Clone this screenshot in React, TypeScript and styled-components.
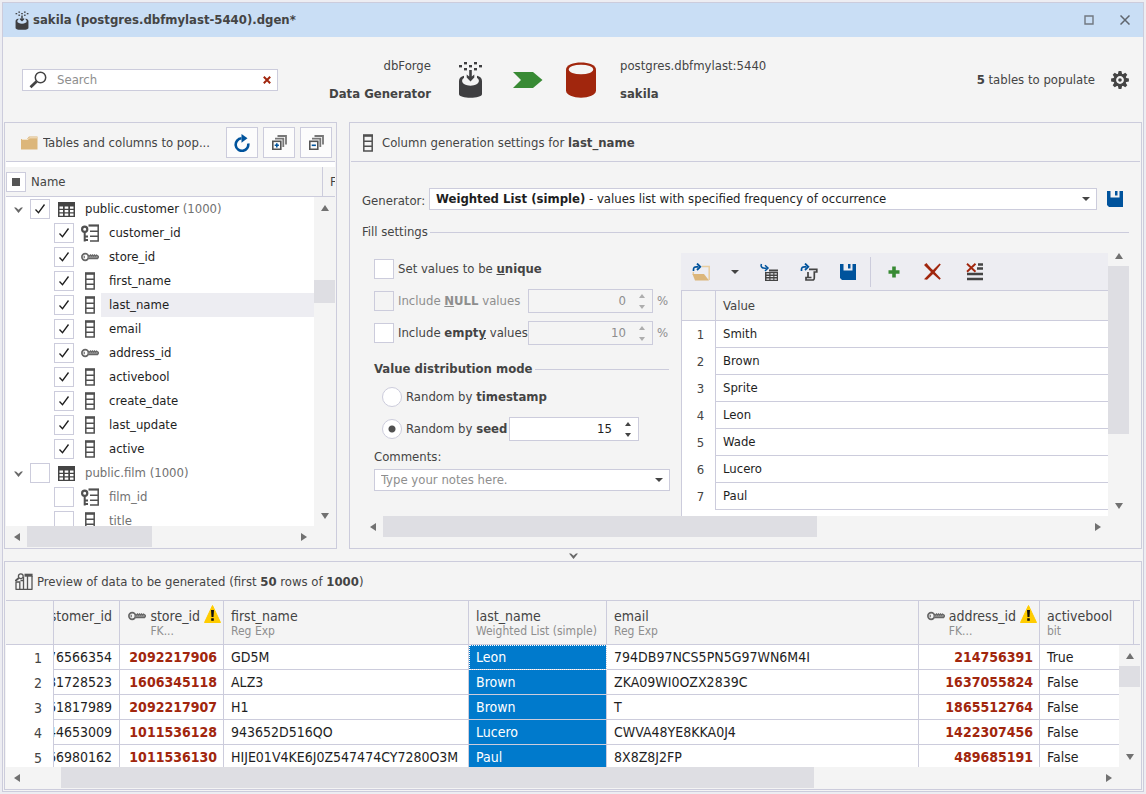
import React from "react";
import styled, { createGlobalStyle } from "styled-components";

const LINE = "#ccccdc";
const BG = "#f4f4f4";
const TEXT = "#444444";
const INK = "#1e1e1e";
const MUTED = "#8e8e8e";
const THUMB = "#dedee3";
const BLUE = "#00539c";
const RED = "#a1260d";
const GREEN = "#388a34";

const GlobalStyle = createGlobalStyle`
  * { box-sizing: border-box; }
  body {
    margin: 0;
    background: #ededf2;
    color: ${TEXT};
    font-family: "DejaVu Sans Condensed", "Noto Sans", Tahoma, sans-serif;
    font-size: 13px;
    line-height: 16px;
  }
  button, input, select { font: inherit; color: inherit; margin: 0; padding: 0; }
  button { border: 0; background: none; cursor: pointer; }
  svg { display: block; flex: none; }
`;

/* ---------- icons ---------- */

const GeneratorIcon = ({ small }: { small?: boolean }) => (
  <svg width={small ? 14 : 25} height={small ? 19 : 37} viewBox="0 0 25 37" preserveAspectRatio="none">
    {[[6, 1], [16, 1], [1, 4], [11, 4], [21, 4], [6, 7], [16, 7]].map(([x, y]) => (
      <rect key={`${x}-${y}`} x={x} y={y} width="3" height="2.4" fill="#3f3f41" />
    ))}
    <path d="M1 20C1 17 3 15.500 6 14.700V17C3.500 18 3.500 21.500 6 23C10 25.200 15 25.200 19 23C21.500 21.500 21.500 18 19 17V14.700C22 15.500 24 17 24 20V33C24 38 1 38 1 33Z" fill="#3f3f41" />
    <path d="M11.200 9H13.800V15.500L16.300 13.500V16.500L12.500 20.500L8.700 16.500V13.500L11.200 15.500Z" fill="#3f3f41" />
  </svg>
);

const SearchIcon = () => (
  <svg width="18" height="18" viewBox="0 0 18 18" fill="none" stroke={TEXT}>
    <circle cx="11.500" cy="6.500" r="5.200" strokeWidth="1.500" />
    <path d="M7.500 10.500L1.500 16.200" strokeWidth="2.800" />
  </svg>
);

const CrossIcon = () => (
  <svg width="8" height="8" viewBox="0 0 8 8" stroke={RED} strokeWidth="2">
    <path d="M0.800 0.800L7.200 7.200M7.200 0.800L0.800 7.200" />
  </svg>
);

const ArrowIcon = () => (
  <svg width="37" height="16" viewBox="-7 0 37 16">
    <path d="M0 0H20L29.500 8L20 16H0L8 8Z" fill={GREEN} />
  </svg>
);

const DatabaseIcon = () => (
  <svg width="30" height="36" viewBox="0 0 30 36">
    <path d="M0 7.500C0 -2 30 -2 30 7.500V28.500C30 38 0 38 0 28.500Z" fill={RED} />
    <ellipse cx="15" cy="7.500" rx="12.200" ry="4.800" fill={BG} />
  </svg>
);

const GearIcon = () => (
  <svg width="18" height="18" viewBox="-9 -9 18 18">
    {[0, 45, 90, 135, 180, 225, 270, 315].map((a) => (
      <path key={a} d="M-2.300 -5L-1.400 -8.900H1.400L2.300 -5Z" fill={TEXT} transform={`rotate(${a})`} />
    ))}
    <circle r="5.200" fill="none" stroke={TEXT} strokeWidth="2.600" />
    <circle r="1.800" fill={TEXT} />
  </svg>
);

const FolderIcon = () => (
  <svg width="17" height="14" viewBox="0 0 17 14">
    <path d="M0 3H6L8 0.500H16.500V13.500H0Z" fill="#dcb67a" />
    <path d="M1 3.500H7L8.500 1.800H16" stroke="#f3e3c8" fill="none" />
  </svg>
);

const RefreshIcon = () => (
  <svg width="18" height="18" viewBox="0 0 18 18">
    <path d="M15.200 9.500A6.300 6.300 0 1 1 8.500 4.300" fill="none" stroke={BLUE} strokeWidth="2.600" />
    <path d="M8.500 0L14.500 4.300L8.500 8.700Z" fill={BLUE} />
  </svg>
);

const StackIcon = ({ plus }: { plus?: boolean }) => (
  <svg width="15" height="15" viewBox="0 0 15 15" fill="none">
    <path d="M5.500 1H14V9.500" stroke="#777" strokeWidth="1.800" />
    <path d="M3 3.700H11.300V12" stroke="#777" strokeWidth="1.800" />
    <rect x="0.800" y="6.300" width="8" height="8" stroke="#555" strokeWidth="1.600" />
    <path d={plus ? "M2.700 10.300H6.900M4.800 8.200V12.400" : "M2.700 10.300H6.900"} stroke={BLUE} strokeWidth="1.600" />
  </svg>
);

const TableIcon = () => (
  <svg width="17" height="15" viewBox="0 0 17 15">
    <path d="M0 0H17V15H0Z" fill={TEXT} />
    <path d="M1.500 4.500h3.500v2.200h-3.500zM6.700 4.500h3.600v2.200h-3.600zM12 4.500h3.500v2.200H12zM1.500 8.100h3.500v2.200h-3.500zM6.700 8.100h3.600v2.200h-3.600zM12 8.100h3.500v2.200H12zM1.500 11.500h3.500v2.200h-3.500zM6.700 11.500h3.600v2.200h-3.600zM12 11.500h3.500v2.200H12z" fill="#fff" />
  </svg>
);

const ColumnIcon = () => (
  <svg width="10" height="18" viewBox="0 0 10 18" fill="none" stroke="#505050">
    <path d="M0.800 1V17H9.200V1" strokeWidth="1.500" />
    <path d="M0 1.500H10" strokeWidth="2.600" />
    <path d="M1 7.300H9M1 12.200H9" strokeWidth="1.400" />
  </svg>
);

const KeyIcon = () => (
  <svg width="18" height="10" viewBox="0 0 18 10" fill="none" stroke="#666">
    <circle cx="4.200" cy="5" r="3.300" strokeWidth="1.700" />
    <path d="M3.200 3.800V6.200" strokeWidth="1.200" />
    <path d="M7.500 4H8.500L9.500 3L10.500 4L11.500 3L12.500 4L13.500 3L14.500 4L15.500 3L17.300 4.300V5.500L16.500 6.500H7.500" strokeWidth="1.300" fill="#999" />
  </svg>
);

const PrimaryKeyIcon = () => (
  <svg width="18" height="18" viewBox="0 0 18 18" fill="none" stroke="#505050">
    <path d="M9 17H17.200V1" strokeWidth="1.500" />
    <path d="M7.500 1.500H18" strokeWidth="2.200" />
    <path d="M9 7.300H17M9 12.200H17" strokeWidth="1.400" />
    <circle cx="3.700" cy="5.200" r="2.600" strokeWidth="2.200" />
    <path d="M3.700 8V17.500M4 12.500H7M4 16H7" strokeWidth="2" />
  </svg>
);

const PreviewIcon = () => (
  <svg width="18" height="17" viewBox="0 0 18 17" fill="none" stroke="#555" strokeWidth="1.300">
    <path d="M1 16.300V9H4.800V16.300M8.500 16.300V7.500H5.500M8.500 7.500V4M12.500 3V16.300M17 3V16.300M0.500 16.300H17.500" />
    <path d="M9.500 2.200H17.600" strokeWidth="3" />
    <circle cx="5.800" cy="3.200" r="2.400" />
    <path d="M3.800 5L0.500 7.800" strokeWidth="2" />
  </svg>
);

const SaveIcon = () => (
  <svg width="16" height="16" viewBox="0 0 16 16">
    <path d="M0 0H3.500V6.500H12.500V0H16V16H2L0 14Z" fill={BLUE} />
    <path d="M8 0H10.500V4.500H8Z" fill={BLUE} />
  </svg>
);

const WarningIcon = () => (
  <svg width="17" height="18" viewBox="0 0 17 18">
    <path d="M8.500 0.500L16.500 17.500H0.500Z" fill="#fc0" stroke="#fc0" strokeLinejoin="round" />
    <path d="M7 5H10L9.500 12H7.500ZM7.200 13.200H9.800V15.800H7.200Z" fill="#111" />
  </svg>
);

const CurlArrow = () => (
  <>
    <path d="M1.500 8V6.500C1.500 4.500 2.700 3.800 4.500 3.800H6.500" fill="none" stroke={BLUE} strokeWidth="1.700" />
    <path d="M5 0.500L8.300 3.800L5 7" fill="none" stroke={BLUE} strokeWidth="1.800" />
  </>
);

const OpenFolderIcon = () => (
  <svg width="18" height="18" viewBox="0 0 18 18">
    <path d="M10 3.500H17.200V17M1.300 9V12" fill="none" stroke="#e8cd9f" strokeWidth="1.500" />
    <path d="M0.500 11H12L17 17.500H3Z" fill="#dcb67a" />
    <CurlArrow />
  </svg>
);

const LoadTableIcon = () => (
  <svg width="18" height="18" viewBox="0 0 18 18">
    <path d="M1.500 1C0 4.500 3 5.500 6.500 5M5 2.200L8 5L5 8" fill="none" stroke={BLUE} strokeWidth="1.500" />
    <path d="M9 6.500H18V8.500H9ZM5 9H18V18H5Z" fill={TEXT} />
    <path d="M6.500 10.800h2.800M10.500 10.800h2.800M14.400 10.800h2.400M6.500 13.500h2.800M10.500 13.500h2.800M14.400 13.500h2.400M6.500 16.200h2.800M10.500 16.200h2.800M14.400 16.200h2.400" stroke="#ededf2" strokeWidth="1.200" />
  </svg>
);

const LoadScriptIcon = () => (
  <svg width="18" height="18" viewBox="0 0 18 18">
    <path d="M9 6.300H16.800V9H14.300V14.500C14.300 16.500 14 17 12.500 17H6V14.500H11.500M8 14V9" fill="none" stroke={TEXT} strokeWidth="1.700" />
    <CurlArrow />
  </svg>
);

const PlusIcon = () => (
  <svg width="12" height="12" viewBox="0 0 12 12" stroke={GREEN} strokeWidth="3.600">
    <path d="M6 0.500V11.500M0.500 6H11.500" />
  </svg>
);

const DeleteIcon = () => (
  <svg width="17" height="17" viewBox="0 0 17 17" fill={RED}>
    <path d="M0 2L2.500 0C5 3 7 5.500 9 7L15.500 0.500L16.800 1.500L10.700 9L16.800 15.500L15.500 16.800L9 11L3 16.800L0 16.200L7 9Z" />
  </svg>
);

const ClearListIcon = () => (
  <svg width="17" height="18" viewBox="0 0 17 18" fill="none">
    <path d="M12 1.500H17M11 5.500H17M1 11H17M1 16H17" stroke={TEXT} strokeWidth="2.400" />
    <path d="M1 0.800L9.500 8.800M9.500 0.800L1 8.800" stroke={RED} strokeWidth="1.900" />
  </svg>
);

const Chevron = () => (
  <svg width="9" height="6" viewBox="0 0 9 6">
    <path d="M0 0.500H2L4.500 2.700L7 0.500H9L4.500 6Z" fill="#686868" />
  </svg>
);

type Dir = "up" | "down" | "left" | "right";
const TRIANGLES: Record<Dir, string> = {
  up: "M0 7L4 1L8 7Z",
  down: "M0 1L4 7L8 1Z",
  left: "M7 0L1 4L7 8Z",
  right: "M1 0L7 4L1 8Z",
};
const Triangle = ({ dir }: { dir: Dir }) => (
  <svg width="8" height="8" viewBox="0 0 8 8"><path d={TRIANGLES[dir]} fill="#717171" /></svg>
);
const Caret = () => (
  <svg width="8" height="4" viewBox="0 0 8 4"><path d="M0 0H8L4 4Z" fill={TEXT} /></svg>
);

/* ---------- scroll bars ---------- */

const Bar = styled.div<{ $vertical?: boolean; $corner?: boolean }>`
  display: flex;
  flex: none;
  flex-direction: ${(p) => (p.$vertical ? "column" : "row")};
  ${(p) => (p.$vertical ? "width: 21px;" : "height: 21px;")}
  ${(p) => p.$corner && "padding-right: 21px;"}
  background: ${BG};
`;
const BarButton = styled.button`
  display: grid;
  place-items: center;
  flex: 0 0 21px;
`;
const Track = styled.div<{ $vertical?: boolean }>`
  display: flex;
  flex: 1;
  min-width: 0;
  min-height: 0;
  flex-direction: ${(p) => (p.$vertical ? "column" : "row")};
`;
const Space = styled.div<{ $grow: number }>`
  flex: ${(p) => p.$grow} 1 0;
`;
const Thumb = styled(Space)`
  background: ${THUMB};
`;

interface ScrollProps {
  vertical?: boolean;
  corner?: boolean;
  before: number;
  size: number;
  after: number;
}
const ScrollBar = ({ vertical, corner, before, size, after }: ScrollProps) => (
  <Bar $vertical={vertical} $corner={corner}>
    <BarButton aria-label={vertical ? "Scroll up" : "Scroll left"}>
      <Triangle dir={vertical ? "up" : "left"} />
    </BarButton>
    <Track $vertical={vertical}>
      <Space $grow={before} />
      <Thumb $grow={size} />
      <Space $grow={after} />
    </Track>
    <BarButton aria-label={vertical ? "Scroll down" : "Scroll right"}>
      <Triangle dir={vertical ? "down" : "right"} />
    </BarButton>
  </Bar>
);

/* ---------- window frame ---------- */

const Page = styled.div`
  display: flex;
  height: 100vh;
  min-height: 640px;
  min-width: 960px;
  padding: 2px;
`;
const Window = styled.div`
  display: flex;
  flex: 1;
  flex-direction: column;
  min-width: 0;
  border: 1px solid ${LINE};
  background: ${BG};
`;
const TitleBar = styled.header`
  display: flex;
  align-items: center;
  flex: none;
  height: 34px;
  padding: 0 13px 0 12px;
  gap: 4px;
  background: #c9def5;
`;
const Title = styled.h1`
  flex: 1;
  margin: 0;
  font-size: 13px;
  line-height: 16px;
`;
const WindowButtons = styled.div`
  display: flex;
  gap: 26px;
`;
const WindowButton = styled.button`
  display: grid;
  place-items: center;
  width: 10px;
  height: 12px;
`;

const Header = styled.div`
  display: flex;
  align-items: center;
  flex: none;
  height: 85px;
  padding: 0 14px 0 19px;
`;
const SearchBox = styled.label`
  display: flex;
  align-items: center;
  width: 256px;
  height: 22px;
  padding: 0 6px;
  gap: 10px;
  border: 1px solid ${LINE};
  background: #fff;
`;
const BareInput = styled.input`
  flex: 1;
  width: 0;
  min-width: 0;
  border: 0;
  outline: 0;
  background: none;
  &::placeholder { color: ${MUTED}; opacity: 1; }
`;
const Flow = styled.div`
  display: flex;
  align-items: center;
  margin-left: 38px;
  gap: 24px;
`;
const FlowText = styled.div<{ $right?: boolean }>`
  display: flex;
  flex-direction: column;
  min-width: 115px;
  gap: 12px;
  text-align: ${(p) => (p.$right ? "right" : "left")};
`;
const Glyphs = styled.div`
  display: flex;
  align-items: center;
  padding-left: 3px;
  gap: 23px;
`;
const Status = styled.div`
  display: flex;
  align-items: center;
  margin-left: auto;
  gap: 16px;
`;
const IconButton = styled.button`
  display: grid;
  place-items: center;
`;

/* ---------- panels ---------- */

const Panels = styled.div`
  display: flex;
  flex: 1;
  min-height: 0;
  padding: 0 1px;
  gap: 12px;
`;
const Panel = styled.section`
  display: flex;
  flex-direction: column;
  min-width: 0;
  padding: 0 1px 1px;
  border: 1px solid ${LINE};
`;
const TreePanel = styled(Panel)`
  flex: 0 0 333px;
`;
const SettingsPanel = styled(Panel)`
  flex: 1;
`;
const PanelHead = styled.div<{ $left: number; $gap: number }>`
  display: flex;
  align-items: center;
  flex: none;
  height: 39px;
  padding-top: 1px;
  padding-left: ${(p) => p.$left}px;
  gap: ${(p) => p.$gap}px;
  border-bottom: 1px solid ${LINE};
`;
const PanelTitle = styled.h2`
  flex: 1;
  overflow: hidden;
  margin: 0;
  font-size: 13px;
  font-weight: 400;
  white-space: nowrap;
  text-overflow: ellipsis;
`;
const ToolButtons = styled.div`
  display: flex;
  gap: 5px;
  padding-right: 3px;
`;
const ToolButton = styled.button`
  display: grid;
  place-items: center;
  width: 32px;
  height: 31px;
  border: 1px solid ${LINE};
  background: #fcfcfc;
`;

/* ---------- tree ---------- */

const TreeHead = styled.div`
  display: flex;
  align-items: center;
  flex: none;
  height: 35px;
  padding-top: 5px;
  border-bottom: 1px solid ${LINE};
  background: linear-gradient(#fff 5px, ${BG} 5px);
`;
const TreeHeadName = styled.span`
  flex: 1;
  padding-left: 5px;
`;
const TreeHeadNext = styled.span`
  align-self: stretch;
  display: flex;
  align-items: center;
  width: 13px;
  padding-left: 7px;
  overflow: hidden;
  border-left: 1px solid ${LINE};
`;
const TreeBody = styled.div`
  display: flex;
  flex: 1;
  min-height: 0;
`;
const TreeList = styled.ul`
  flex: 1;
  overflow: hidden;
  margin: 0;
  padding: 0;
  list-style: none;
  background: #fff;
`;
const TreeRow = styled.li<{ $child?: boolean }>`
  display: flex;
  align-items: center;
  height: 24px;
  padding-left: ${(p) => (p.$child ? 48 : 8)}px;
`;
const Twisty = styled.button`
  width: 16px;
  padding-top: 2px;
`;
const TreeIcon = styled.span<{ $child?: boolean }>`
  display: grid;
  place-items: center;
  width: ${(p) => (p.$child ? 22 : 17)}px;
  margin: ${(p) => (p.$child ? "0 0 0 5px" : "0 2px 0 8px")};
`;
const TreeText = styled.label<{ $on: boolean; $selected?: boolean }>`
  flex: 1;
  padding-left: 8px;
  line-height: 24px;
  white-space: nowrap;
  color: ${(p) => (p.$on ? INK : "#717171")};
  background: ${(p) => (p.$selected ? "#ededf2" : "none")};
`;
const Count = styled.span`
  color: #717171;
`;

const CHECK =
  `url("data:image/svg+xml,%3Csvg xmlns='http://www.w3.org/2000/svg' width='18' height='18'%3E%3Cpath d='M4.500 9.500L7.500 12.700L13.500 4.500' fill='none' stroke='%231e1e1e' stroke-width='1.300'/%3E%3C/svg%3E")`;

const Check = styled.input.attrs({ type: "checkbox" })<{ $mixed?: boolean }>`
  appearance: none;
  flex: none;
  margin: 0;
  width: 20px;
  height: 20px;
  border: 1px solid ${LINE};
  background: ${(p) => (p.$mixed ? "linear-gradient(#555, #555) center / 8px 8px no-repeat #fff" : "#fff")};
  &:checked { background: ${CHECK} center no-repeat #fff; }
  &:disabled { background: ${BG}; }
`;
const Radio = styled.input.attrs({ type: "radio" })`
  appearance: none;
  flex: none;
  width: 20px;
  height: 20px;
  border: 1px solid ${LINE};
  border-radius: 50%;
  background: #fff;
  &:checked { background: radial-gradient(circle, #505050 3px, #fff 4px); }
`;

type Kind = "table" | "pk" | "fk" | "column";
interface Node {
  name: string;
  kind: Kind;
  on: boolean;
  selected?: boolean;
  count?: number;
}
const NODES: Node[] = [
  { name: "public.customer", kind: "table", on: true, count: 1000 },
  { name: "customer_id", kind: "pk", on: true },
  { name: "store_id", kind: "fk", on: true },
  { name: "first_name", kind: "column", on: true },
  { name: "last_name", kind: "column", on: true, selected: true },
  { name: "email", kind: "column", on: true },
  { name: "address_id", kind: "fk", on: true },
  { name: "activebool", kind: "column", on: true },
  { name: "create_date", kind: "column", on: true },
  { name: "last_update", kind: "column", on: true },
  { name: "active", kind: "column", on: true },
  { name: "public.film", kind: "table", on: false, count: 1000 },
  { name: "film_id", kind: "pk", on: false },
  { name: "title", kind: "column", on: false },
];
const KIND_ICONS: Record<Kind, React.ReactNode> = {
  table: <TableIcon />,
  pk: <PrimaryKeyIcon />,
  fk: <KeyIcon />,
  column: <ColumnIcon />,
};

const Tree = () => (
  <TreePanel>
    <PanelHead $left={15} $gap={5}>
      <FolderIcon />
      <PanelTitle>Tables and columns to pop...</PanelTitle>
      <ToolButtons>
        <ToolButton aria-label="Refresh"><RefreshIcon /></ToolButton>
        <ToolButton aria-label="Expand all"><StackIcon plus /></ToolButton>
        <ToolButton aria-label="Collapse all"><StackIcon /></ToolButton>
      </ToolButtons>
    </PanelHead>
    <TreeHead>
      <Check $mixed aria-label="Select all" />
      <TreeHeadName>Name</TreeHeadName>
      <TreeHeadNext>F</TreeHeadNext>
    </TreeHead>
    <TreeBody>
      <TreeList>
        {NODES.map((n) => {
          const child = n.kind !== "table";
          return (
            <TreeRow key={n.name} $child={child}>
              {!child && <Twisty aria-label="Collapse"><Chevron /></Twisty>}
              <Check id={`node-${n.name}`} defaultChecked={n.on} />
              <TreeIcon $child={child}>{KIND_ICONS[n.kind]}</TreeIcon>
              <TreeText htmlFor={`node-${n.name}`} $on={n.on} $selected={n.selected}>
                {n.name}
                {n.count && <Count> ({n.count})</Count>}
              </TreeText>
            </TreeRow>
          );
        })}
      </TreeList>
      <ScrollBar vertical before={62} size={23} after={202} />
    </TreeBody>
    <ScrollBar corner before={0} size={125} after={141} />
  </TreePanel>
);

/* ---------- generator settings ---------- */

const Settings = styled.div`
  display: flex;
  flex: 1;
  flex-direction: column;
  min-height: 0;
  padding: 26px 11px 10px;
`;
const GeneratorRow = styled.div`
  display: flex;
  align-items: center;
  flex: none;
  padding-right: 6px;
`;
const GeneratorLabel = styled.label`
  width: 67px;
  padding-top: 4px;
`;
const Combo = styled.div`
  position: relative;
  display: flex;
  align-items: center;
  flex: 1;
  height: 22px;
  padding: 0 6px;
  border: 1px solid ${LINE};
  background: #fff;
  color: ${INK};
`;
const ComboText = styled.span`
  flex: 1;
  white-space: nowrap;
`;
const ComboSelect = styled.select`
  position: absolute;
  inset: 0;
  width: 100%;
  opacity: 0;
`;
const SaveButton = styled(IconButton)`
  margin-left: 10px;
`;
const Rule = styled.div<{ $top: number; $bottom?: number }>`
  display: flex;
  align-items: center;
  flex: none;
  margin-top: ${(p) => p.$top}px;
  margin-bottom: ${(p) => p.$bottom ?? 0}px;
  gap: 2px;
  white-space: nowrap;
  &::after {
    content: "";
    flex: 1;
    height: 1px;
    background: ${LINE};
  }
`;
const Fill = styled.div`
  display: flex;
  flex: 1;
  min-height: 0;
  margin-top: 5px;
`;
const FillMain = styled.div`
  display: flex;
  flex: 1;
  flex-direction: column;
  min-width: 0;
`;
const FillView = styled.div`
  display: flex;
  flex: 1;
  min-height: 0;
  overflow: hidden;
`;
const Form = styled.form`
  flex: 0 0 319px;
  padding: 8px 12px 0;
`;
const FormRow = styled.div<{ $indent?: boolean; $disabled?: boolean }>`
  display: flex;
  align-items: center;
  height: 32px;
  padding-left: ${(p) => (p.$indent ? 8 : 0)}px;
  gap: 4px;
  white-space: nowrap;
  color: ${(p) => (p.$disabled ? MUTED : TEXT)};
`;
const OptionLabel = styled.label<{ $width?: number }>`
  ${(p) => p.$width && `width: ${p.$width}px;`}
`;
const SpinBox = styled.div<{ $width: number; $disabled?: boolean }>`
  display: flex;
  align-items: center;
  width: ${(p) => p.$width}px;
  height: 24px;
  padding: 0 6px;
  gap: 12px;
  border: 1px solid ${LINE};
  background: ${(p) => (p.$disabled ? BG : "#fff")};
  color: ${(p) => (p.$disabled ? MUTED : INK)};
`;
const SpinInput = styled(BareInput).attrs({ type: "number" })`
  text-align: right;
  appearance: textfield;
  &::-webkit-inner-spin-button { appearance: none; margin: 0; }
`;
const SpinArrows = styled.div<{ $disabled?: boolean }>`
  display: flex;
  flex-direction: column;
  gap: 7px;
  opacity: ${(p) => (p.$disabled ? 0.4 : 1)};
`;
const SpinButton = styled.button`
  height: 4px;
`;
const Percent = styled.span`
  color: ${MUTED};
`;
const CommentLabel = styled.label`
  display: block;
  padding: 4px 0;
`;
const CommentBox = styled(Combo)`
  margin-right: -1px;
`;

const Spinner = ({ id, label, value, width, disabled }: { id: string; label: string; value: number; width: number; disabled?: boolean }) => (
  <SpinBox $width={width} $disabled={disabled}>
    <SpinInput id={id} aria-label={label} defaultValue={value} disabled={disabled} />
    <SpinArrows $disabled={disabled}>
      <SpinButton type="button" aria-label="Increase" disabled={disabled}>
        <svg width="8" height="4" viewBox="0 0 8 4"><path d="M1 4H7L4 0Z" fill={TEXT} /></svg>
      </SpinButton>
      <SpinButton type="button" aria-label="Decrease" disabled={disabled}>
        <svg width="8" height="4" viewBox="0 0 8 4"><path d="M1 0H7L4 4Z" fill={TEXT} /></svg>
      </SpinButton>
    </SpinArrows>
  </SpinBox>
);

const Values = styled.div`
  display: flex;
  flex: 1;
  flex-direction: column;
  min-width: 0;
  margin-top: 8px;
`;
const Toolbar = styled.div`
  display: flex;
  align-items: center;
  flex: none;
  height: 37px;
  padding-left: 11px;
  background: #ededf2;
`;
const ToolbarButton = styled(IconButton)<{ $gap: number }>`
  margin-right: ${(p) => p.$gap}px;
`;
const Separator = styled.div`
  width: 1px;
  height: 30px;
  margin-right: 17px;
  background: ${LINE};
`;
const ValueArea = styled.div`
  flex: 1;
  border-left: 1px solid ${LINE};
  background: #fff;
`;
const ValueTable = styled.table`
  width: 100%;
  border-spacing: 0;
  th, td { height: 27px; padding: 0 7px; text-align: left; font-weight: 400; }
  td { color: ${INK}; border-left: 1px solid ${LINE}; border-bottom: 1px solid ${LINE}; }
  tbody th { width: 33px; padding: 0 0 0 4px; text-align: center; }
  thead th {
    height: 31px;
    border-top: 1px solid ${LINE};
    border-bottom: 1px solid ${LINE};
    background: ${BG};
  }
  thead th + th { border-left: 1px solid ${LINE}; }
`;
const VALUES = ["Smith", "Brown", "Sprite", "Leon", "Wade", "Lucero", "Paul"];

const SideScroll = styled.div`
  display: flex;
  margin-bottom: 21px;
`;

const ColumnSettings = () => (
  <SettingsPanel>
    <PanelHead $left={12} $gap={9}>
      <ColumnIcon />
      <PanelTitle>Column generation settings for <b>last_name</b></PanelTitle>
    </PanelHead>
    <Settings>
      <GeneratorRow>
        <GeneratorLabel htmlFor="generator">Generator:</GeneratorLabel>
        <Combo>
          <ComboText>
            <b>Weighted List (simple)</b> - values list with specified frequency of occurrence
          </ComboText>
          <Caret />
          <ComboSelect id="generator">
            <option>Weighted List (simple)</option>
          </ComboSelect>
        </Combo>
        <SaveButton aria-label="Save generator"><SaveIcon /></SaveButton>
      </GeneratorRow>
      <Rule $top={14}>Fill settings</Rule>
      <Fill>
        <FillMain>
          <FillView>
            <Form>
              <FormRow>
                <Check id="unique" />
                <OptionLabel htmlFor="unique">Set values to be <b><u>u</u>nique</b></OptionLabel>
              </FormRow>
              <FormRow $disabled>
                <Check id="nulls" disabled />
                <OptionLabel htmlFor="nulls" $width={126}>Include <b><u>N</u>ULL</b> values</OptionLabel>
                <Spinner id="nulls-percent" label="NULL percent" value={0} width={125} disabled />
                <Percent>%</Percent>
              </FormRow>
              <FormRow>
                <Check id="empties" />
                <OptionLabel htmlFor="empties" $width={126}>Include <b>empt<u>y</u></b> values</OptionLabel>
                <Spinner id="empty-percent" label="Empty percent" value={10} width={125} disabled />
                <Percent>%</Percent>
              </FormRow>
              <Rule $top={12} $bottom={4}><b>Value distribution mode</b></Rule>
              <FormRow $indent>
                <Radio id="by-time" name="mode" />
                <OptionLabel htmlFor="by-time">Random by <b>timestamp</b></OptionLabel>
              </FormRow>
              <FormRow $indent>
                <Radio id="by-seed" name="mode" defaultChecked />
                <OptionLabel htmlFor="by-seed" $width={99}>Random by <b>seed</b></OptionLabel>
                <Spinner id="seed" label="Seed" value={15} width={130} />
              </FormRow>
              <CommentLabel htmlFor="comments">Comments:</CommentLabel>
              <CommentBox>
                <BareInput id="comments" placeholder="Type your notes here." />
                <IconButton type="button" aria-label="Open comment"><Caret /></IconButton>
              </CommentBox>
            </Form>
            <Values>
              <Toolbar>
                <ToolbarButton $gap={21} aria-label="Load from file"><OpenFolderIcon /></ToolbarButton>
                <ToolbarButton $gap={21} aria-label="More load options"><Caret /></ToolbarButton>
                <ToolbarButton $gap={22} aria-label="Load from table"><LoadTableIcon /></ToolbarButton>
                <ToolbarButton $gap={22} aria-label="Load from query"><LoadScriptIcon /></ToolbarButton>
                <ToolbarButton $gap={14} aria-label="Save list"><SaveIcon /></ToolbarButton>
                <Separator />
                <ToolbarButton $gap={24} aria-label="Add value"><PlusIcon /></ToolbarButton>
                <ToolbarButton $gap={25} aria-label="Delete value"><DeleteIcon /></ToolbarButton>
                <ToolbarButton $gap={0} aria-label="Clear list"><ClearListIcon /></ToolbarButton>
              </Toolbar>
              <ValueArea>
                <ValueTable>
                  <thead><tr><th aria-label="Row" /><th>Value</th></tr></thead>
                  <tbody>
                    {VALUES.map((v, i) => (
                      <tr key={v}><th>{i + 1}</th><td>{v}</td></tr>
                    ))}
                  </tbody>
                </ValueTable>
              </ValueArea>
            </Values>
          </FillView>
          <ScrollBar before={0} size={434} after={270} />
        </FillMain>
        <SideScroll>
          <ScrollBar vertical before={0} size={168} after={61} />
        </SideScroll>
      </Fill>
    </Settings>
  </SettingsPanel>
);

/* ---------- preview ---------- */

const Splitter = styled.button`
  display: grid;
  place-items: center;
  flex: none;
  height: 12px;
  padding-top: 2px;
`;
const PreviewPanel = styled(Panel)`
  flex: none;
  margin: 0 1px 1px;
`;
const PreviewView = styled.div`
  position: relative;
  height: 166px;
  overflow: hidden;
  background: #fff;
`;
const PreviewScroll = styled.div`
  position: absolute;
  top: 44px;
  right: 0;
  bottom: 0;
  display: flex;
`;
const PreviewTable = styled.table`
  width: 100%;
  table-layout: fixed;
  border-spacing: 0;
  font-size: 14px;
  white-space: nowrap;
`;
const Col = styled.col<{ $width?: number }>`
  ${(p) => p.$width && `width: ${p.$width}px;`}
`;
const HeadCell = styled.th`
  height: 44px;
  padding: 7px 7px 0;
  overflow: hidden;
  border-right: 1px solid ${LINE};
  border-bottom: 1px solid ${LINE};
  background: ${BG};
  text-align: left;
  vertical-align: top;
  font-weight: 400;
  &:last-child { border-right: 0; }
`;
const ClipRight = styled.div`
  display: flex;
  justify-content: flex-end;
  margin-left: -7px;
  overflow: hidden;
`;
const KeyHead = styled.div`
  display: flex;
  justify-content: flex-end;
  margin-right: -5px;
  gap: 4px;
`;
const KeySlot = styled.span`
  display: flex;
  align-items: center;
  height: 16px;
`;
const WarningSlot = styled.span`
  margin-top: -3px;
`;
const HeadSub = styled.div`
  font-size: 12px;
  line-height: 15px;
  color: ${MUTED};
`;
const RowNumber = styled.th`
  padding-right: 11px;
  border-right: 1px solid ${LINE};
  text-align: right;
  font-weight: 400;
`;
const Cell = styled.td<{ $look?: "key" | "selected" | "focused" }>`
  height: 25px;
  padding: 0 7px;
  overflow: hidden;
  border-right: 1px solid ${LINE};
  border-bottom: 1px solid ${LINE};
  color: ${INK};
  ${(p) => p.$look === "key" && `color: ${RED}; font-weight: 700; text-align: right; padding-right: 6px;`}
  ${(p) => (p.$look === "selected" || p.$look === "focused") && "background: #007acc; color: #fff;"}
  ${(p) => p.$look === "focused" && "outline: 1px dotted #fff; outline-offset: -1px;"}
`;

const ROWS = [
  ["76566354", "2092217906", "GD5M", "Leon", "794DB97NCS5PN5G97WN6M4I", "214756391", "True"],
  ["81728523", "1606345118", "ALZ3", "Brown", "ZKA09WI0OZX2839C", "1637055824", "False"],
  ["61817989", "2092217907", "H1", "Brown", "T", "1865512764", "False"],
  ["44653009", "1011536128", "943652D516QO", "Lucero", "CWVA48YE8KKA0J4", "1422307456", "False"],
  ["66980162", "1011536130", "HIJE01V4KE6J0Z547474CY7280O3M", "Paul", "8X8Z8J2FP", "489685191", "False"],
];

const KeyColumnHead = ({ name }: { name: string }) => (
  <HeadCell>
    <KeyHead>
      <KeySlot><KeyIcon /></KeySlot>
      <div>{name}<HeadSub>FK...</HeadSub></div>
      <WarningSlot><WarningIcon /></WarningSlot>
    </KeyHead>
  </HeadCell>
);

const Preview = () => (
  <PreviewPanel>
    <PanelHead $left={9} $gap={4}>
      <PreviewIcon />
      <PanelTitle>Preview of data to be generated (first <b>50</b> rows of <b>1000</b>)</PanelTitle>
    </PanelHead>
    <PreviewView>
      <PreviewTable>
        <colgroup>
          {[48, 66, 104, 245, 138].map((w) => <Col key={w} $width={w} />)}
          <Col />
          {[121, 94, 6].map((w) => <Col key={w} $width={w} />)}
        </colgroup>
        <thead>
          <tr>
            <HeadCell aria-label="Row" />
            <HeadCell><ClipRight>customer_id</ClipRight></HeadCell>
            <KeyColumnHead name="store_id" />
            <HeadCell>first_name<HeadSub>Reg Exp</HeadSub></HeadCell>
            <HeadCell>last_name<HeadSub>Weighted List (simple)</HeadSub></HeadCell>
            <HeadCell>email<HeadSub>Reg Exp</HeadSub></HeadCell>
            <KeyColumnHead name="address_id" />
            <HeadCell>activebool<HeadSub>bit</HeadSub></HeadCell>
            <HeadCell aria-hidden />
          </tr>
        </thead>
        <tbody>
          {ROWS.map(([customer, store, first, last, email, address, active], i) => (
            <tr key={store}>
              <RowNumber>{i + 1}</RowNumber>
              <Cell><ClipRight>{customer}</ClipRight></Cell>
              <Cell $look="key">{store}</Cell>
              <Cell>{first}</Cell>
              <Cell $look={i === 0 ? "focused" : "selected"}>{last}</Cell>
              <Cell>{email}</Cell>
              <Cell $look="key">{address}</Cell>
              <Cell>{active}</Cell>
              <Cell />
            </tr>
          ))}
        </tbody>
      </PreviewTable>
      <PreviewScroll>
        <ScrollBar vertical before={0} size={21} after={60} />
      </PreviewScroll>
    </PreviewView>
    <ScrollBar corner before={34} size={753} after={284} />
  </PreviewPanel>
);

/* ---------- app ---------- */

export default function App() {
  return (
    <Page>
      <GlobalStyle />
      <Window>
        <TitleBar>
          <GeneratorIcon small />
          <Title>sakila (postgres.dbfmylast-5440).dgen*</Title>
          <WindowButtons>
            <WindowButton aria-label="Maximize">
              <svg width="10" height="10" viewBox="0 0 10 10"><path d="M1 1H9V9H1Z" fill="none" stroke="#717880" strokeWidth="1.400" /></svg>
            </WindowButton>
            <WindowButton aria-label="Close">
              <svg width="10" height="10" viewBox="0 0 10 10"><path d="M0.500 0.500L9.500 9.500M9.500 0.500L0.500 9.500" stroke="#60666e" strokeWidth="1.500" /></svg>
            </WindowButton>
          </WindowButtons>
        </TitleBar>
        <Header>
          <SearchBox>
            <SearchIcon />
            <BareInput type="text" placeholder="Search" aria-label="Search" />
            <IconButton aria-label="Clear search"><CrossIcon /></IconButton>
          </SearchBox>
          <Flow>
            <FlowText $right><span>dbForge</span><b>Data Generator</b></FlowText>
            <Glyphs>
              <GeneratorIcon />
              <ArrowIcon />
              <DatabaseIcon />
            </Glyphs>
            <FlowText><span>postgres.dbfmylast:5440</span><b>sakila</b></FlowText>
          </Flow>
          <Status>
            <span><b>5</b> tables to populate</span>
            <IconButton aria-label="Settings"><GearIcon /></IconButton>
          </Status>
        </Header>
        <Panels>
          <Tree />
          <ColumnSettings />
        </Panels>
        <Splitter aria-label="Collapse preview"><Chevron /></Splitter>
        <Preview />
      </Window>
    </Page>
  );
}
